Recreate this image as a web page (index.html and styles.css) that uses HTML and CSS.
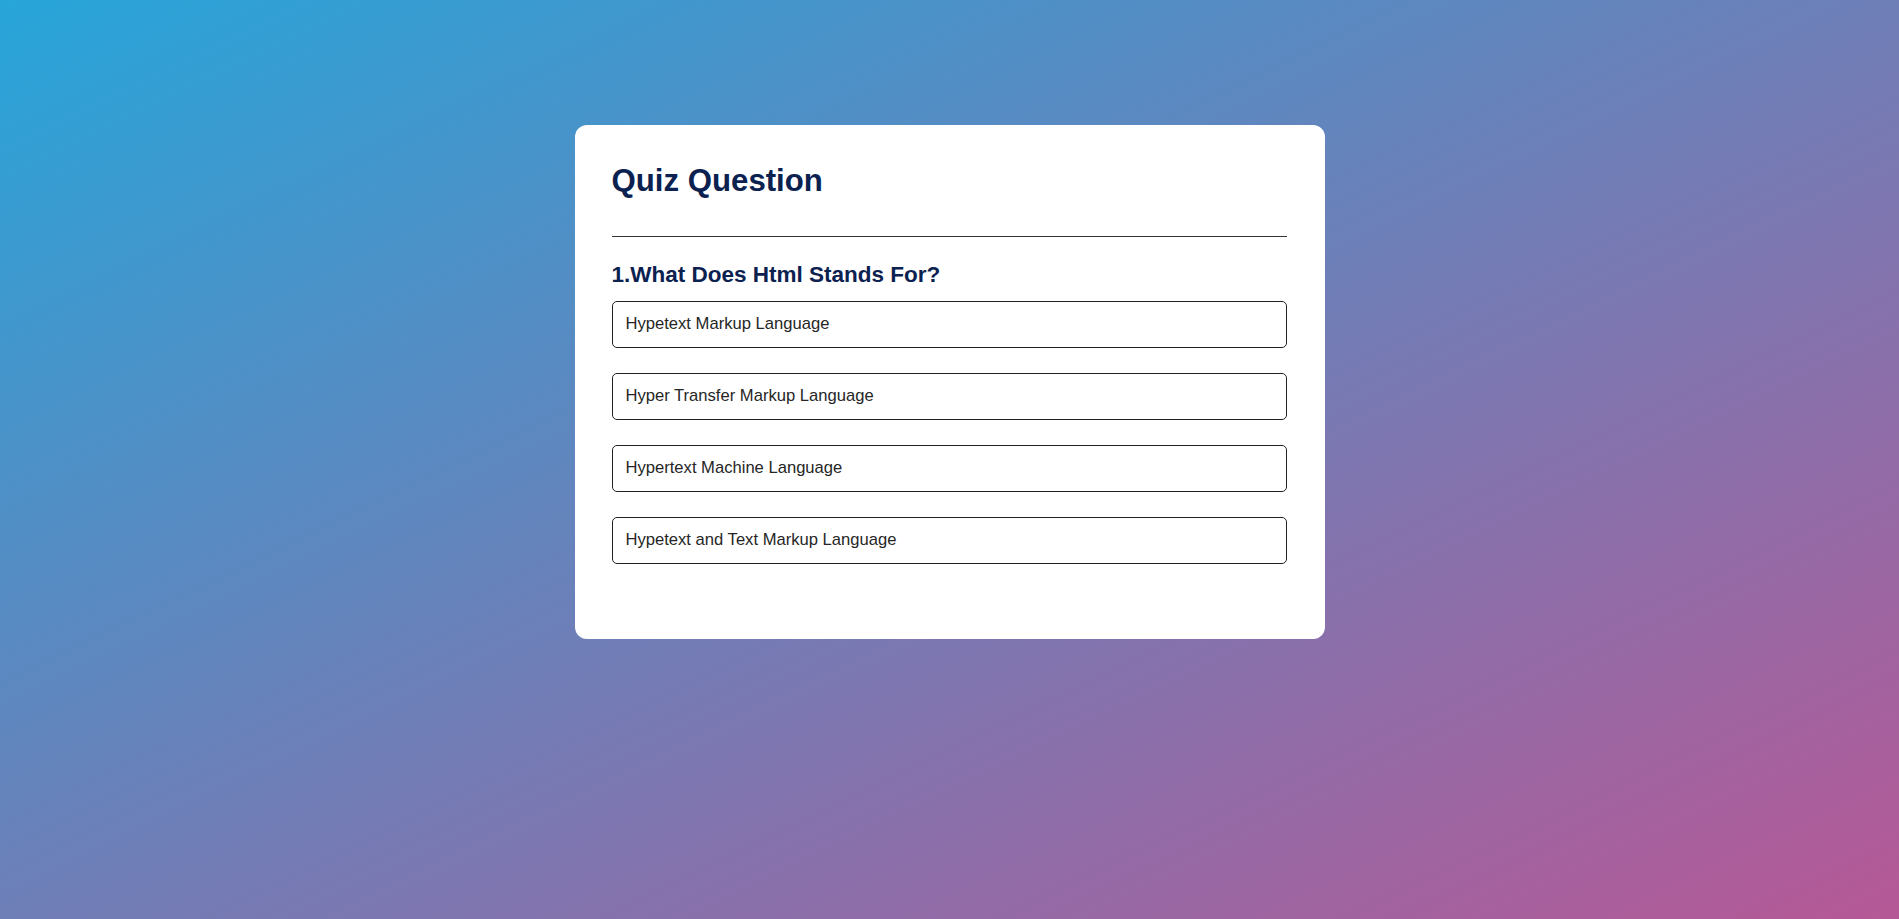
FILE: index.html
```html
<!DOCTYPE html>
<html lang="en">
<head>
<meta charset="utf-8">
<title>Quiz</title>
<link rel="stylesheet" href="styles.css">
</head>
<body>
<main class="page">
  <section class="card">
    <h1 class="title">Quiz Question</h1>
    <div class="divider"></div>
    <h2 class="question">1.What Does Html Stands For?</h2>
    <ul class="options">
      <li class="option">Hypetext Markup Language</li>
      <li class="option">Hyper Transfer Markup Language</li>
      <li class="option">Hypertext Machine Language</li>
      <li class="option">Hypetext and Text Markup Language</li>
    </ul>
  </section>
</main>
</body>
</html>
```

FILE: styles.css
```css
* { box-sizing: border-box; }

html, body {
  margin: 0;
  height: 100%;
}

body {
  font-family: "Liberation Sans", Arial, sans-serif;
  background: linear-gradient(to bottom right, #27a5d9, #b65896);
  min-height: 919px;
}

.page {
  display: flex;
  justify-content: center;
  padding-top: 125px;
}

.card {
  width: 750px;
  background: #ffffff;
  border-radius: 12px;
  padding: 38px 38px 75px 37px;
}

.title {
  margin: 0;
  font-size: 31.2px;
  font-weight: bold;
  line-height: 36px;
  color: #0b2150;
}

.divider {
  margin-top: 37px;
  border-top: 1px solid #333333;
}

.question {
  margin: 25px 0 0;
  font-size: 22.5px;
  font-weight: bold;
  line-height: 26px;
  color: #0b2150;
}

.options {
  list-style: none;
  margin: 13px 0 0;
  padding: 0;
  display: flex;
  flex-direction: column;
  gap: 25.5px;
}

.option {
  border: 1px solid #222222;
  border-radius: 5px;
  padding: 13px 13px;
  font-size: 16.6px;
  line-height: 18.5px;
  color: #262626;
}
```
